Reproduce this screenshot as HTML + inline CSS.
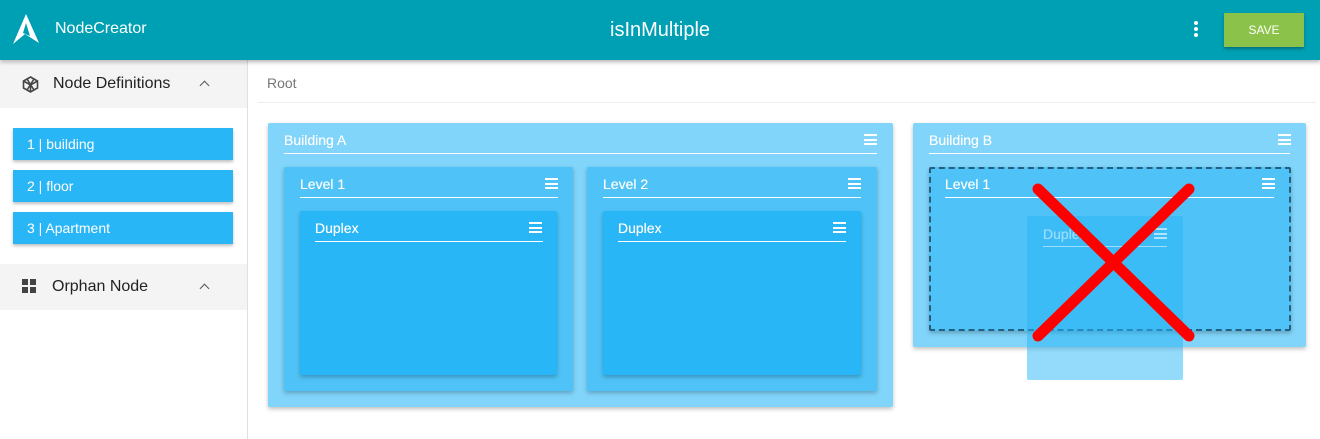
<!DOCTYPE html>
<html><head><style>
*{box-sizing:border-box;margin:0;padding:0}
body{width:1320px;height:439px;overflow:hidden;font-family:"Liberation Sans",sans-serif;background:#fff;position:relative}
.a{position:absolute}
.hdr{left:0;top:0;width:1320px;height:60px;background:#00a0b4;box-shadow:0 2px 4px rgba(0,0,0,.3);z-index:5}
.side{left:0;top:60px;width:248px;height:379px;border-right:1px solid #e0e0e0}
.sh{left:0;width:247px;height:46px;background:#f4f4f4;font-size:16px;color:#222}
.item{left:13px;width:220px;height:32px;background:#29b6f6;color:#fff;font-size:14px;padding:8px 0 0 14px;box-shadow:0 2px 3px rgba(0,0,0,.25)}
.card{box-shadow:0 2px 4px rgba(0,0,0,.25);border-radius:2px}
.t{color:#fff;font-size:14px;text-shadow:0 0 .4px #fff}
.ul{height:1px;background:#fff}
.m{width:13px;height:11px;border-top:2px solid #fff;border-bottom:2px solid #fff}
.m:after{content:"";position:absolute;left:0;top:2.5px;width:13px;height:2px;background:#fff}
.chev{width:7px;height:7px;border-left:1.5px solid #555;border-top:1.5px solid #555;transform:rotate(45deg)}
</style></head><body>
<div class="a hdr">
 <svg class="a" style="left:13px;top:14px" width="27" height="30" viewBox="0 0 27 30"><path d="M13 0 L0 30 L12 20 L26 29 Z M13 9 L17 22 L10 19 Z" fill="#fff" fill-rule="evenodd"/></svg>
 <div class="a" style="left:55px;top:20px;color:#fff;font-size:16px">NodeCreator</div>
 <div class="a" style="left:610px;top:19px;color:#fff;font-size:20px">isInMultiple</div>
 <div class="a" style="left:1194px;top:21px;width:4px;height:4px;background:#fff;border-radius:2px;box-shadow:0 6px 0 #fff,0 12px 0 #fff"></div>
 <div class="a" style="left:1224px;top:13px;width:80px;height:34px;background:#8bc34a;color:#fff;font-size:12px;text-align:center;line-height:34px;box-shadow:0 2px 3px rgba(0,0,0,.3)">SAVE</div>
</div>
<div class="a side"></div>
<div class="a sh" style="top:62px">
 <svg class="a" style="left:22px;top:14px" width="17" height="17" viewBox="0 0 17 17"><path d="M8.5 1 L15.5 5 L15.5 12 L8.5 16 L1.5 12 L1.5 5 Z M1.5 5 L8.5 9 L15.5 5 M8.5 9 L8.5 16 M5 3 L12 14 M12 3 L5 14" fill="none" stroke="#444" stroke-width="1.6"/></svg>
 <div class="a" style="left:53px;top:13px">Node Definitions</div>
 <div class="a chev" style="left:201px;top:20px"></div>
</div>
<div class="a item" style="top:128px">1 | building</div>
<div class="a item" style="top:170px">2 | floor</div>
<div class="a item" style="top:212px">3 | Apartment</div>
<div class="a sh" style="top:264px">
 <div class="a" style="left:22px;top:15px;width:6px;height:6px;background:#444;box-shadow:8px 0 #444,0 8px #444,8px 8px #444"></div>
 <div class="a" style="left:52px;top:14px">Orphan Node</div>
 <div class="a chev" style="left:201px;top:21px"></div>
</div>
<div class="a" style="left:267px;top:75px;color:#777;font-size:14px">Root</div>
<div class="a" style="left:258px;top:102px;width:1058px;height:1px;background:#eee"></div>

<div class="a card" style="left:268px;top:123px;width:625px;height:284px;background:#81d4fa"></div>
<div class="a t" style="left:284px;top:132px">Building A</div>
<div class="a ul" style="left:284px;top:153px;width:593px"></div>
<div class="a m" style="left:864px;top:134px"></div>
<div class="a card" style="left:284px;top:167px;width:289px;height:224px;background:#4fc3f7"></div>
<div class="a t" style="left:300px;top:176px">Level 1</div>
<div class="a ul" style="left:300px;top:197px;width:258px"></div>
<div class="a m" style="left:545px;top:178px"></div>
<div class="a card" style="left:300px;top:211px;width:257px;height:164px;background:#29b6f6"></div>
<div class="a t" style="left:315px;top:220px">Duplex</div>
<div class="a ul" style="left:315px;top:241px;width:228px"></div>
<div class="a m" style="left:529px;top:222px"></div>
<div class="a card" style="left:587px;top:167px;width:290px;height:224px;background:#4fc3f7"></div>
<div class="a t" style="left:603px;top:176px">Level 2</div>
<div class="a ul" style="left:603px;top:197px;width:258px"></div>
<div class="a m" style="left:848px;top:178px"></div>
<div class="a card" style="left:603px;top:211px;width:258px;height:164px;background:#29b6f6"></div>
<div class="a t" style="left:618px;top:220px">Duplex</div>
<div class="a ul" style="left:618px;top:241px;width:228px"></div>
<div class="a m" style="left:833px;top:222px"></div>

<div class="a card" style="left:913px;top:123px;width:393px;height:224px;background:#81d4fa"></div>
<div class="a t" style="left:929px;top:132px">Building B</div>
<div class="a ul" style="left:929px;top:153px;width:361px"></div>
<div class="a m" style="left:1278px;top:134px"></div>
<div class="a card" style="left:929px;top:167px;width:362px;height:164px;background:#4fc3f7;border:2px dashed #235f80"></div>
<div class="a t" style="left:945px;top:176px">Level 1</div>
<div class="a ul" style="left:945px;top:197px;width:329px"></div>
<div class="a m" style="left:1262px;top:178px"></div>
<div class="a" style="left:1027px;top:216px;width:156px;height:164px;background:rgba(41,182,246,.5);border-radius:2px"></div>
<div class="a t" style="left:1043px;top:226px;opacity:.5">Duplex</div>
<div class="a ul" style="left:1043px;top:246px;width:124px;opacity:.5"></div>
<div class="a m" style="left:1154px;top:228px;opacity:.6"></div>
<svg class="a" style="left:0;top:0" width="1320" height="439"><path d="M1038 189 L1189 336 M1189 189 L1038 336" stroke="#f00" stroke-width="11" stroke-linecap="round"/></svg>
</body></html>
